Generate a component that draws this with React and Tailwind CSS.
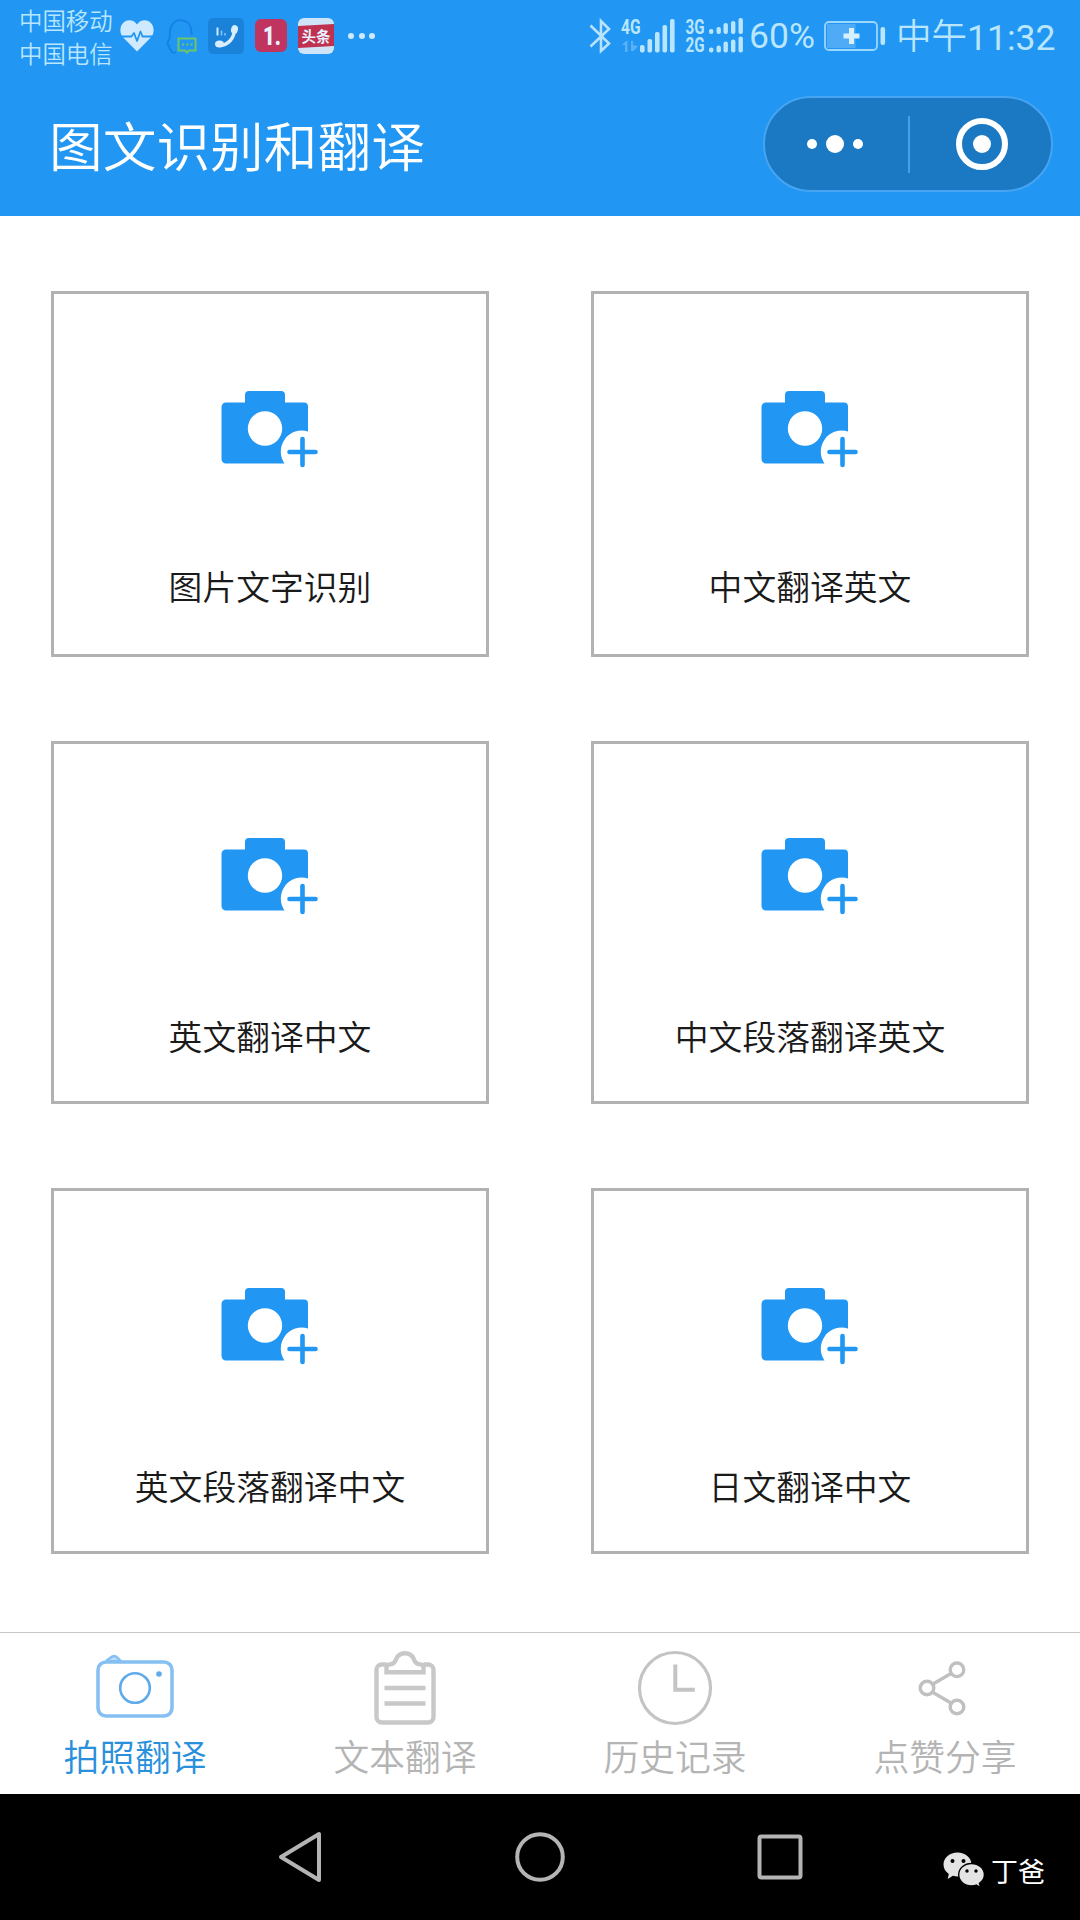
const FEATURES = [
  ['图片文字识别', '中文翻译英文'],
  ['英文翻译中文', '中文段落翻译英文'],
  ['英文段落翻译中文', '日文翻译中文'],
]

// The middle row sits a little tighter than the other two
const ROW_STYLES = [
  { card: 'h-[366px] pt-[96px]', label: 'mt-[93px]' },
  { card: 'h-[363px] pt-[93px]', label: 'mt-[96px]' },
  { card: 'h-[366px] pt-[96px]', label: 'mt-[96px]' },
]

const TABS = [
  { label: '拍照翻译', Icon: CameraTabIcon, active: true },
  { label: '文本翻译', Icon: ClipboardIcon },
  { label: '历史记录', Icon: ClockIcon },
  { label: '点赞分享', Icon: ShareIcon },
]

function HeartIcon() {
  return (
    <svg className="w-[34px] h-[32px] ml-[7px]" viewBox="0 0 34 32">
      <path fill="#cfeaff" d="M17 31.5 3.2 17.6C-1.2 13 0 5.500 3.600 2.500 8-1.200 14.200.2 17 4.600 19.800.2 26-1.200 30.400 2.500 34 5.500 35.200 13 30.800 17.600Z" />
      <path fill="none" stroke="#2196f3" strokeWidth="1.800" strokeLinejoin="round" d="M0 16.500h11.500l2.500-3.500 3 8 3.500-9.500 2 5H34" />
    </svg>
  )
}

function QQIcon() {
  return (
    <svg className="w-[32px] h-[35px] ml-[12px]" viewBox="0 0 32 35" fill="none">
      <path stroke="#1580e6" strokeWidth="1.800" d="M10 33.500c-3 .5-5-.5-5-2.500-2-1.500-2-4-2-4-2 0-2-4 .8-8C3 7 8 1.200 14.500 1.200S25 6 25.500 13v3" />
      <g stroke="#6cc56a" strokeWidth="2">
        <path d="M12.500 19.500H29.500V31.500h-6.500l-2 2-2-2h-6.500Z" />
        <path strokeDasharray="2.200 2" d="M16 25.500h10.600" />
      </g>
    </svg>
  )
}

function PhoneIcon() {
  return (
    <svg className="w-[36px] h-[36px] ml-[10px]" viewBox="0 0 36 36">
      <rect width="36" height="36" rx="5" fill="#1b82da" />
      <path d="M9.500 9.500v8" stroke="#cfeaff" strokeWidth="2" />
      <path d="M13.500 12.500v5M17 15v2.500" stroke="#8cc6f3" strokeWidth="1.500" />
      <path fill="none" stroke="#d8eeff" strokeWidth="3.400" d="M11 27.500c9 0 15.500-7 15.500-17" />
      <ellipse cx="11.500" cy="26" rx="4.500" ry="3.600" fill="#d8eeff" />
      <ellipse cx="26.500" cy="11.500" rx="3.400" ry="4.400" fill="#d8eeff" transform="rotate(15 26.500 11.500)" />
    </svg>
  )
}

function BluetoothIcon() {
  return (
    <svg className="w-[22px] h-[36px]" viewBox="0 0 22 36" fill="none" stroke="#b9e2fd" strokeWidth="2.600">
      <path d="M1.500 7.500 20 25.500 12 33V3l8 8L1.500 28.500" />
    </svg>
  )
}

function SignalIcons() {
  const big = [[639, 45], [646.500, 39], [654, 32], [661.500, 25], [669, 19]]
  const small = [[708, 5], [715.500, 7], [722.500, 11], [730, 13], [737.500, 16]]
  return (
    <svg className="w-[124px] h-[38px] ml-[9px] overflow-visible" viewBox="619 17 124 38" fill="#b9e6fd">
      <g fontFamily="Roboto, sans-serif" fontWeight="700" fontSize="20">
        <text x="620" y="34" textLength="19.500" lengthAdjust="spacingAndGlyphs">4G</text>
        <text x="684.500" y="34" textLength="19" lengthAdjust="spacingAndGlyphs">3G</text>
        <text x="684.500" y="52" textLength="19" lengthAdjust="spacingAndGlyphs">2G</text>
      </g>
      <path fill="#5bb1f6" d="m621 45 4-4h1.500v11H624v-7ZM630 41h2v4l5 1-4.500 5H630Z" />
      {big.map(([x, y]) => (
        <rect key={x} x={x} y={y} width="4.600" height={52.500 - y} rx="1.800" />
      ))}
      {small.map(([x, h]) => (
        <g key={x}>
          <rect x={x} y={34 - h} width="4.400" height={h} rx="2" />
          <rect x={x} y={52.500 - h} width="4.400" height={h} rx="2" />
        </g>
      ))}
    </svg>
  )
}

function BatteryIcon() {
  return (
    <svg className="w-[63px] h-[30px] ml-[10px]" viewBox="0 0 63 30">
      <rect x="3" y="3" width="28.500" height="24" fill="#4fabf6" />
      <rect x="1" y="1" width="52" height="28" rx="4" fill="none" stroke="#9bd6fb" strokeWidth="1.800" />
      <path d="M27.500 7v16M19.500 15h16" stroke="#d6f0ff" strokeWidth="5" />
      <rect x="56.500" y="6" width="4.600" height="18" rx="2.200" fill="#b9e6fd" />
    </svg>
  )
}

function CameraPlusIcon() {
  return (
    <svg className="w-[97px] h-[78px] mr-px shrink-0" viewBox="0 0 97 78">
      <path
        fill="#2196f3"
        fillRule="evenodd"
        d="M5 12.500h19V5a4 4 0 0 1 4-4h32a4 4 0 0 1 4 4v7.500h19a4 4 0 0 1 4 4V41.500A21 21 0 0 0 63.500 73.500H5a4.500 4.500 0 0 1-4.500-4.500V17A4.500 4.500 0 0 1 5 12.500ZM44 21.300a17.200 17.200 0 1 0 0 34.400 17.200 17.200 0 1 0 0-34.400Z"
      />
      <path d="M81.500 49v26M68.500 62h26" stroke="#2196f3" strokeWidth="4.600" strokeLinecap="round" />
    </svg>
  )
}

function CameraTabIcon() {
  return (
    <svg className="w-[80px] h-[76px]" viewBox="95 1650 80 76" fill="none" stroke="#86c0f2">
      <rect x="98" y="1662" width="74" height="54" rx="8" strokeWidth="3.600" />
      <path fill="#bcdcf8" d="M106 1660.500c4-.5 4-4.500 8-4.500s4 4 8 5.500Z" strokeWidth="2.600" />
      <circle cx="135" cy="1688" r="14.800" stroke="#5faaea" strokeWidth="2.600" />
      <circle cx="159" cy="1674" r="2.800" fill="#5faaea" stroke="none" />
    </svg>
  )
}

function ClipboardIcon() {
  return (
    <svg className="w-[80px] h-[76px]" viewBox="365 1650 80 76" fill="none" stroke="#c8c8c8" strokeWidth="4.400">
      <path d="M386 1664.500h-4a5.500 5.500 0 0 0-5.500 5.500v47a5.500 5.500 0 0 0 5.500 5.500h46a5.500 5.500 0 0 0 5.500-5.500v-47a5.500 5.500 0 0 0-5.500-5.500h-4" />
      <path d="M386.500 1672.300v-7.300c8-.5 8.500-3 10-6.500 3-7 14-7 17 0 1.500 3.500 2 6 10 6.500v7.300Z" />
      <path d="M384.500 1688h41M384.500 1703.500h41" />
    </svg>
  )
}

function ClockIcon() {
  return (
    <svg className="w-[80px] h-[76px]" viewBox="635 1650 80 76" fill="none" stroke="#c4c4c4">
      <circle cx="675" cy="1688" r="35.500" strokeWidth="3.200" />
      <path d="M675.300 1664.500v25.300h19.500" strokeWidth="4" />
    </svg>
  )
}

function ShareIcon() {
  return (
    <svg className="w-[80px] h-[76px]" viewBox="905 1650 80 76" fill="none" stroke="#c0c0c0" strokeWidth="3.400">
      <circle cx="957" cy="1669.800" r="6.800" />
      <circle cx="957" cy="1707" r="6.800" />
      <circle cx="927" cy="1688" r="6.800" />
      <path d="m933 1684 18-10.500M933 1692.500l18 10.500" />
    </svg>
  )
}

function WechatIcon() {
  return (
    <svg className="w-[42px] h-[36px]" viewBox="0 0 42 36" fill="#e4e4e4">
      <path d="M14.500.5C6.800.5.500 5.700.500 12.500c0 4 2 7.300 5.300 9.400L4.700 27l5.200-3.200c1.700.5 3 .6 4.600.6 7.700 0 14-5.200 14-11.900S22.200.500 14.500.500Z" />
      <path stroke="#000" strokeWidth="1.400" d="M28.500 11.500c-7.200 0-12.800 4.900-12.800 11.200s5.600 11.200 12.800 11.200c1.700 0 3.300-.3 4.700-.8l4.400 2.400-1.200-4.200c3-2 5-5 5-8.600 0-6.300-5.700-11.200-12.900-11.200Z" />
      <g fill="#000">
        <circle cx="9.500" cy="9" r="2" />
        <circle cx="20.500" cy="9" r="2" />
        <circle cx="24" cy="19" r="1.700" />
        <circle cx="33" cy="19" r="1.700" />
      </g>
    </svg>
  )
}

function StatusBar() {
  return (
    <div className="flex items-center justify-between h-[72px] pl-[19px] pr-[23px] text-[#b9e6fd] whitespace-nowrap">
      <div className="flex items-center">
        <div className="w-[94px] pt-px text-[23.400px] leading-[33px] font-[350]">
          <div>中国移动</div>
          <div>中国电信</div>
        </div>
        <HeartIcon />
        <QQIcon />
        <PhoneIcon />
        <svg className="w-[34px] h-[34px] ml-[10px]" viewBox="0 0 34 34">
          <rect x="1" width="32" height="33" rx="6" fill="#bf3560" />
          <text x="9" y="25.500" fill="#e6f2ff" fontFamily="Roboto, sans-serif" fontWeight="900" fontSize="25" textLength="18" lengthAdjust="spacingAndGlyphs">1.</text>
        </svg>
        <svg className="w-[36px] h-[36px] ml-[10px]" viewBox="0 0 36 36">
          <rect width="36" height="36" rx="6" fill="#cfe4f8" />
          <path d="M0 8 36 6v22L0 30Z" fill="#c0304f" />
          <text x="3.500" y="23.500" fill="#e6f2ff" fontWeight="700" fontSize="14.500">头条</text>
        </svg>
        <div className="flex gap-[4.500px] ml-[14px]">
          <span className="size-[6px] rounded-full bg-[#cfeaff]" />
          <span className="size-[6px] rounded-full bg-[#cfeaff]" />
          <span className="size-[6px] rounded-full bg-[#cfeaff]" />
        </div>
      </div>
      <div className="flex items-center">
        <BluetoothIcon />
        <SignalIcons />
        <span className="w-[65px] ml-[5px] pb-px text-[35.500px] leading-[40px] font-['Roboto'] font-normal">60%</span>
        <BatteryIcon />
        <span className="flex w-[161px] ml-[9px] leading-[40px]">
          <span className="text-[35.500px] font-[350]">中午</span>
          <span className="pt-[4px] text-[35.500px] font-['Roboto'] font-normal">11:32</span>
        </span>
      </div>
    </div>
  )
}

function Capsule() {
  return (
    <div className="flex items-center w-[290px] h-[96px] rounded-full border-2 border-[#45a5f3] bg-[#1b78c3]">
      <div className="w-[143px] flex items-center justify-center gap-[9px] pr-[4px]">
        <span className="size-[10px] rounded-full bg-white" />
        <span className="size-[18px] rounded-full bg-white" />
        <span className="size-[10px] rounded-full bg-white" />
      </div>
      <div className="w-[2px] h-[57px] bg-[#45a0e8]" />
      <div className="flex-1 flex items-center justify-center pl-[3px]">
        <div className="flex items-center justify-center size-[52px] rounded-full border-[6px] border-white">
          <span className="size-[18px] rounded-full bg-white" />
        </div>
      </div>
    </div>
  )
}

function FeatureCard({ label, styles }) {
  return (
    <button className={`flex flex-col items-center w-[438px] border-[3px] border-[#b2b2b2] ${styles.card}`}>
      <CameraPlusIcon />
      <span className={`text-[33.800px] leading-[50px] font-[350] text-[#1a1a1a] whitespace-nowrap ${styles.label}`}>
        {label}
      </span>
    </button>
  )
}

export default function App() {
  return (
    <div className="flex flex-col w-[1080px] h-[1920px] bg-white font-['Noto_Sans_CJK_SC',sans-serif]" lang="zh-CN">

      {/* Header */}
      <header className="h-[216px] bg-[#2196f3]">
        <StatusBar />
        <div className="flex items-center justify-between h-[144px] pl-[49px] pr-[27px]">
          <h1 className="text-[53.700px] leading-[80px] font-[350] text-white whitespace-nowrap">图文识别和翻译</h1>
          <Capsule />
        </div>
      </header>

      {/* Feature grid */}
      <main className="flex flex-col gap-[84px] h-[1416px] pt-[75px]">
        {FEATURES.map((row, i) => (
          <div key={row[0]} className="flex justify-between px-[51px]">
            {row.map((label) => (
              <FeatureCard key={label} label={label} styles={ROW_STYLES[i]} />
            ))}
          </div>
        ))}
      </main>

      {/* Tab bar */}
      <nav className="grid grid-cols-4 h-[162px] border-t border-[#c8c8c8]">
        {TABS.map(({ label, Icon, active }) => (
          <div key={label} className="flex flex-col items-center pt-[17px]">
            <Icon />
            <span className={`mt-[2px] text-[35.800px] leading-[54px] font-[350] ${active ? 'text-[#2a90dc]' : 'text-[#b4b4b4]'}`}>
              {label}
            </span>
          </div>
        ))}
      </nav>

      {/* System navigation */}
      <footer className="relative flex items-center justify-center gap-[188px] h-[126px] bg-black">
        <svg className="w-[52px] h-[52px]" viewBox="0 0 52 52" fill="none" stroke="#b4b4b4" strokeWidth="4" strokeLinejoin="round">
          <path d="M7 26 45 3v46Z" />
        </svg>
        <svg className="w-[52px] h-[52px]" viewBox="0 0 52 52" fill="none" stroke="#b4b4b4" strokeWidth="4">
          <circle cx="26" cy="26" r="22.800" />
        </svg>
        <svg className="w-[52px] h-[52px]" viewBox="0 0 52 52" fill="none" stroke="#b4b4b4" strokeWidth="4">
          <rect x="5.500" y="5.500" width="41" height="41" rx="2" />
        </svg>
        <div className="absolute right-[35px] top-[57px] flex items-center gap-[6px]">
          <WechatIcon />
          <span className="pt-[2px] text-[27px] leading-[36px] text-white">丁爸</span>
        </div>
      </footer>
    </div>
  )
}
